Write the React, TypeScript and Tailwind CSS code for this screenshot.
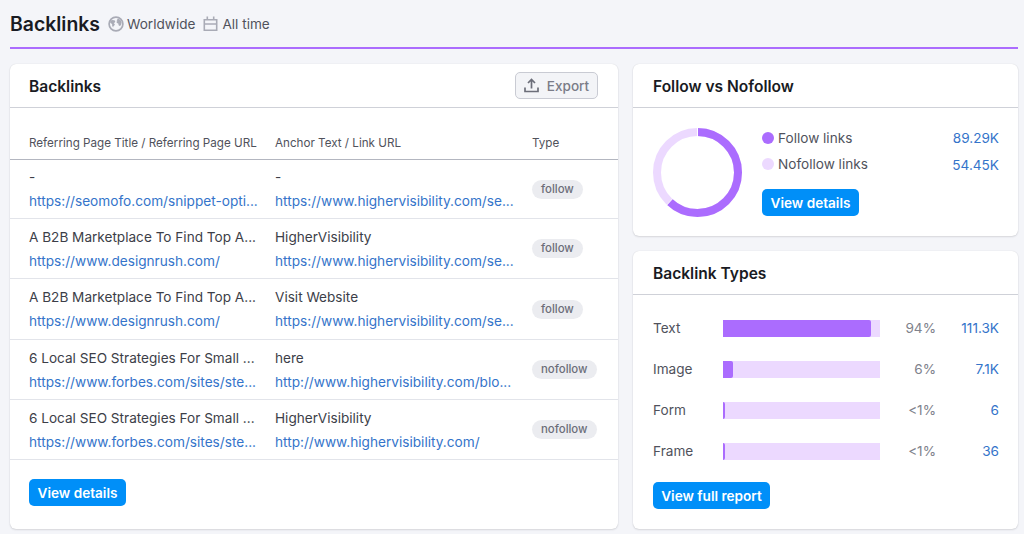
import React from "react";

const rows = [
  { title: "-", url: "https://seomofo.com/snippet-opti...", anchor: "-", link: "https://www.highervisibility.com/se...", type: "follow", h: "h-[59px]" },
  { title: "A B2B Marketplace To Find Top A...", url: "https://www.designrush.com/", anchor: "HigherVisibility", link: "https://www.highervisibility.com/se...", type: "follow", h: "h-[60px]" },
  { title: "A B2B Marketplace To Find Top A...", url: "https://www.designrush.com/", anchor: "Visit Website", link: "https://www.highervisibility.com/se...", type: "follow", h: "h-[61px]" },
  { title: "6 Local SEO Strategies For Small ...", url: "https://www.forbes.com/sites/ste...", anchor: "here", link: "http://www.highervisibility.com/blo...", type: "nofollow", h: "h-[60px]" },
  { title: "6 Local SEO Strategies For Small ...", url: "https://www.forbes.com/sites/ste...", anchor: "HigherVisibility", link: "http://www.highervisibility.com/", type: "nofollow", h: "h-[60px]" },
];

const types = [
  { name: "Text", width: 147.5, share: "94%", count: "111.3K" },
  { name: "Image", width: 9.5, share: "6%", count: "7.1K" },
  { name: "Form", width: 2, share: "<1%", count: "6" },
  { name: "Frame", width: 2, share: "<1%", count: "36" },
];

const card = "rounded-md bg-white shadow-[0_0_1px_rgba(25,27,35,0.16),0_1px_2px_rgba(25,27,35,0.12)]";
const heading = "flex h-[44px] shrink-0 items-center border-b border-[#cfd1d8] text-[15.55px] font-semibold text-[#191b23]";

function PrimaryButton({ children, width }: { children: React.ReactNode; width: string }) {
  return (
    <button className={`flex h-[27px] items-center justify-center rounded-[5px] bg-[#008ff8] text-[13.6px] font-semibold text-white ${width}`}>
      {children}
    </button>
  );
}

function Globe() {
  return (
    <svg width="16" height="16" viewBox="0 0 16 16" fill="none">
      <circle cx="8" cy="8" r="6.9" stroke="#a9abb6" strokeWidth="1.7" />
      <path d="M2.2 5.2 3.8 4l2.4.2 1.1.9-.4 1.4-1.3.6 1.3 1.2-.6 1.3-.9.6-.2 1.2-1-1.5-.1-1.8L2.3 7zM8.6 4.2l1.5-1.6 2.4 1.5 1.1 2.2-.5 2.6-1.3 1.2-1.2-.9-.3-1.6-1.4-.6-.4-1.2.9-.8z" fill="#a9abb6" />
    </svg>
  );
}

function Calendar() {
  return (
    <svg width="15" height="16" viewBox="0 0 15 16" fill="none" stroke="#a9abb6" strokeWidth="1.6">
      <path d="M1.3 3.8h12.4v10.4H1.3zM1.3 8h12.4M4.3.6v3.2M10.7.6v3.2" />
    </svg>
  );
}

export default function App() {
  return (
    <div className="flex h-[534px] w-[1024px] flex-col overflow-hidden bg-[#f4f5f9] pl-[10px] pr-[6px] font-['Inter','Liberation_Sans',sans-serif] text-[13.6px] leading-5 text-[#50525c]">
      <header className="flex h-[49px] shrink-0 items-center border-b-2 border-[#ab6cfe]">
        <h1 className="text-[19.4px] font-semibold text-[#191b23]">Backlinks</h1>
        <span className="ml-2 flex items-center gap-[3px]"><Globe />Worldwide</span>
        <span className="ml-2 flex items-center gap-1"><Calendar />All time</span>
      </header>
      <main className="mt-[15px] flex gap-[15px]">
        <section className={`flex h-[465px] w-[608px] flex-col ${card}`}>
          <div className={`${heading} justify-between pl-[19px] pr-5`}>
            <span className="pt-0.5">Backlinks</span>
            <button className="flex h-[27px] w-[83px] items-center justify-center gap-2 rounded-[5px] border border-[#c9cbd3] bg-[#f3f4f7] text-[13.6px] font-medium text-[#7a7c87]">
              <svg width="15" height="15" viewBox="0 0 15 15" fill="none" stroke="#6c6e79" strokeWidth="1.7">
                <path d="M1 9.5v4h13v-4M7.5 10.5V2M4 5l3.5-3.5L11 5" />
              </svg>
              Export
            </button>
          </div>
          <div className="grid h-[52px] shrink-0 grid-cols-[246px_257px_1fr] items-end border-b border-[#b3b6c0] pl-[19px] pr-5 pb-[6px] text-[11.65px]">
            <span>Referring Page Title / Referring Page URL</span>
            <span>Anchor Text / Link URL</span>
            <span>Type</span>
          </div>
          {rows.map((r, i) => (
            <div key={i} className={`grid shrink-0 grid-cols-[246px_257px_1fr] items-center whitespace-nowrap border-b border-[#e2e4ea] pl-[19px] pr-5 ${r.h}`}>
              <div className="flex flex-col leading-6"><span className="text-[#3c3e48]">{r.title}</span><a className="text-[13.65px] text-[#3474ca]">{r.url}</a></div>
              <div className="flex flex-col leading-6"><span className="text-[#3c3e48]">{r.anchor}</span><a className="text-[13.65px] text-[#3474ca]">{r.link}</a></div>
              <span className="w-fit rounded-full bg-[#ebecf0] px-[9px] text-[11.4px] font-medium leading-[19px] text-[#6c6e79]">{r.type}</span>
            </div>
          ))}
          <div className="pl-[19px] pt-[19px]"><PrimaryButton width="w-[97px]">View details</PrimaryButton></div>
        </section>
        <div className="flex w-[385px] flex-col gap-[15px]">
          <section className={`h-[172px] ${card}`}>
            <div className={`${heading} px-5 pt-0.5`}>Follow vs Nofollow</div>
            <div className="flex pl-5 pr-[19px] pt-5">
              <svg width="89" height="89" viewBox="0 0 89 89" fill="none" strokeWidth="8">
                <circle cx="44.5" cy="44.5" r="40.5" stroke="#ecd9ff" />
                <circle cx="44.5" cy="44.5" r="40.5" stroke="#ab6cfe" pathLength="100" strokeDasharray="62.1 37.9" transform="rotate(-90 44.5 44.5)" />
                <path d="M44.5 0v9M19.8 70.5l-6.5 7" stroke="white" strokeWidth="1" />
              </svg>
              <div className="ml-5 flex flex-1 flex-col">
                <div className="flex h-[20px] items-center"><i className="mr-1 size-3 rounded-full bg-[#ab6cfe]" /><span className="-mt-px">Follow links</span><a className="-mt-px ml-auto text-[#3474ca]">89.29K</a></div>
                <div className="mt-[6px] flex h-[20px] items-center"><i className="mr-1 size-3 rounded-full bg-[#ecd9ff]" />Nofollow links<a className="ml-auto pt-0.5 text-[#3474ca]">54.45K</a></div>
                <div className="mt-[15px]"><PrimaryButton width="w-[97px]">View details</PrimaryButton></div>
              </div>
            </div>
          </section>
          <section className={`h-[278px] ${card}`}>
            <div className={`${heading} px-5 pt-0.5`}>Backlink Types</div>
            <div className="flex flex-col pl-5 pr-[19px] pt-[13px]">
              {types.map((t) => (
                <div key={t.name} className="grid h-[41px] grid-cols-[70px_157px_56px_1fr] items-center">
                  <span className="pb-px">{t.name}</span>
                  <div className="h-[17px] bg-[#ecd9ff]"><div className="h-full rounded-r-[2px] bg-[#ab6cfe]" style={{ width: t.width }} /></div>
                  <span className="pb-px text-right text-[#80828c]">{t.share}</span>
                  <a className="pb-px text-right text-[#3474ca]">{t.count}</a>
                </div>
              ))}
              <div className="mt-[10px]"><PrimaryButton width="w-[117px]">View full report</PrimaryButton></div>
            </div>
          </section>
        </div>
      </main>
    </div>
  );
}
